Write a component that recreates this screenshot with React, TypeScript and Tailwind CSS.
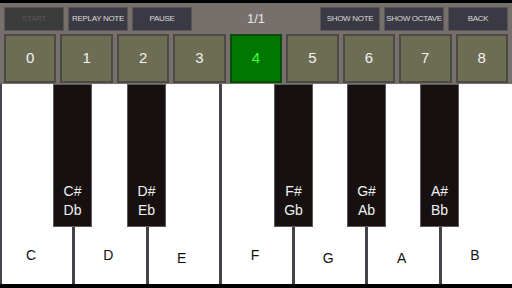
import React from "react";

const TOP_LEFT = [
  { label: "START", disabled: true },
  { label: "REPLAY NOTE" },
  { label: "PAUSE" },
];

const TOP_RIGHT = [{ label: "SHOW NOTE" }, { label: "SHOW OCTAVE" }, { label: "BACK" }];

const OCTAVES = [0, 1, 2, 3, 4, 5, 6, 7, 8];
const ACTIVE_OCTAVE = 4;

// labels are not quite centred in the original, and some sit lower
const WHITE_KEYS = [
  { note: "C", pad: "pb-[18px]", nudge: "mr-[12px]" },
  { note: "D", pad: "pb-[18px]", nudge: "mr-[4px]" },
  { note: "E", pad: "pb-[15px]", nudge: "mr-[4px]" },
  { note: "F", pad: "pb-[18px]", nudge: "mr-[4px]" },
  { note: "G", pad: "pb-[15px]", nudge: "mr-[4px]" },
  { note: "A", pad: "pb-[15px]", nudge: "mr-[4px]" },
  { note: "B", pad: "pb-[18px]", nudge: "mr-[4px]" },
];

const BLACK_KEYS = [
  { sharp: "C#", flat: "Db", left: "left-[53px]" },
  { sharp: "D#", flat: "Eb", left: "left-[127px]" },
  { sharp: "F#", flat: "Gb", left: "left-[274px]" },
  { sharp: "G#", flat: "Ab", left: "left-[347px]" },
  { sharp: "A#", flat: "Bb", left: "left-[420px]" },
];

function TopButton({ label, disabled }: { label: string; disabled?: boolean }) {
  return (
    <div
      className={
        "w-[60px] h-[24px] flex items-center justify-center text-[8px] tracking-[-0.3px] border border-[#5c5658] " +
        (disabled ? "bg-[#3d3c3c] text-[#5a5858]" : "bg-[#3a3944] text-[#dcdcdc]")
      }
    >
      {label}
    </div>
  );
}

export default function App() {
  return (
    <div
      className="w-[512px] h-[288px] bg-black flex flex-col overflow-hidden"
      style={{ fontFamily: '"Liberation Sans", Arial, sans-serif' }}
    >
      {/* Header */}
      <div className="mt-[3px] bg-[#766f6c] flex flex-col">
        <div className="flex items-center px-[4px] pt-[3px] h-[29px]">
          <div className="flex gap-[4px]">
            {TOP_LEFT.map((b) => (
              <TopButton key={b.label} label={b.label} disabled={b.disabled} />
            ))}
          </div>
          <div className="flex-1 text-center text-[13px] text-[#e4e4e4]">1/1</div>
          <div className="flex gap-[4px]">
            {TOP_RIGHT.map((b) => (
              <TopButton key={b.label} label={b.label} />
            ))}
          </div>
        </div>

        {/* Octave selector */}
        <div className="flex gap-[4px] px-[4px] pt-[2px] pb-[1px] h-[52px]">
          {OCTAVES.map((o) => (
            <div
              key={o}
              className={
                "flex-1 flex items-center justify-center text-[15px] border-2 " +
                (o === ACTIVE_OCTAVE
                  ? "bg-[#007800] border-[#0a4a0a] text-[#3cff3c]"
                  : "bg-[#6d6d53] border-[#4b4a44] text-[#f2f2f2]")
              }
            >
              {o}
            </div>
          ))}
        </div>
      </div>

      {/* Keyboard */}
      <div className="relative h-[200px] flex gap-[3px] pl-[2px] bg-[#45424c]">
        {WHITE_KEYS.map((k) => (
          <div
            key={k.note}
            className={"flex-1 w-0 bg-white flex items-end justify-center text-[14px] text-[#111] " + k.pad}
          >
            <span className={k.nudge}>{k.note}</span>
          </div>
        ))}

        {BLACK_KEYS.map((k) => (
          <div
            key={k.sharp}
            className={
              "absolute top-0 w-[39px] h-[143px] bg-[#171010] border border-[#5e5a5c] flex flex-col items-center justify-end pb-[6px] text-[14px] leading-[19px] text-[#f0f0f0] " +
              k.left
            }
          >
            <span>{k.sharp}</span>
            <span>{k.flat}</span>
          </div>
        ))}
      </div>
    </div>
  );
}
